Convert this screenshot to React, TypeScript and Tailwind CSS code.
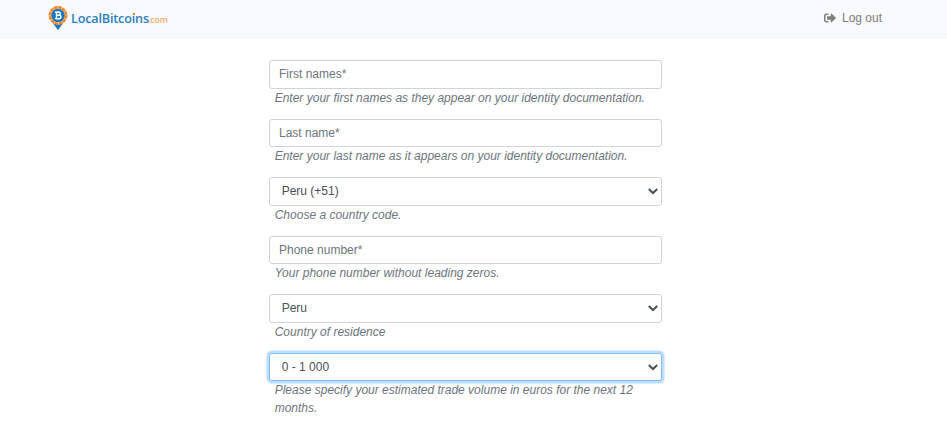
import React from "react";
import { FaSignOutAlt } from "react-icons/fa";

const control =
  "block h-[28.4px] w-full rounded-[3px] border bg-white text-[12px] leading-[18px]";
const hint = "pl-[5.7px] text-[12px] italic leading-[18px] text-[#6c757d]";

function TextField({ label, help }: { label: string; help: string }) {
  return (
    <div className="h-[58.5px]">
      <input
        className={
          control +
          " border-[#ced4da] px-[9px] pb-[0.2px] placeholder:text-[#6c757d] placeholder:opacity-100"
        }
        placeholder={label}
      />
      <p className={hint}>{help}</p>
    </div>
  );
}

function SelectField({ value, help, focused }: { value: string; help: string; focused?: boolean }) {
  return (
    <div className="h-[58.5px]">
      <div
        className={
          control +
          " text-[#495057] " +
          (focused ? "border-[#80bdff] shadow-[0_0_0_2.6px_rgba(0,123,255,0.25)]" : "border-[#ced4da]")
        }
      >
        <div className="flex h-full items-center justify-between pl-[11.7px] pr-[3px]">
          <span className="pb-[0.4px]">{value}</span>
          <svg width="10" height="7" viewBox="0 0 10 7" fill="none" stroke="#495057" strokeWidth="2" className="mt-[0.6px]">
            <path d="M0.8 1l4.2 4 4.2-4" />
          </svg>
        </div>
      </div>
      <p className={hint}>{help}</p>
    </div>
  );
}

function Logo() {
  return (
    <div className="flex h-[26px] items-center">
      <svg width="20" height="26" viewBox="0 0 20 26" className="shrink-0">
        <path d="M4.5 17.5h11L10 25.2z" fill="#1b78bd" />
        <circle cx="10" cy="10.4" r="9.4" fill="#f8bd86" />
        <circle cx="10" cy="10.4" r="8.2" fill="none" stroke="#f4872b" strokeWidth="2.3" strokeDasharray="3.1 1.19" />
        <circle cx="10" cy="10.4" r="6.7" fill="#1b78bd" />
        <g fill="none" stroke="#fff" strokeWidth="1.4">
          <path d="M7 7.2h3.6c2.3 0 2.3 3 0 3H8.4M8.4 10.2h2.6c2.5 0 2.5 3.4 0 3.4H7M8.5 7.2v6.4" />
          <path d="M9 5.9v1.3M10.8 5.9v1.3M9 13.6v1.3M10.8 13.6v1.3" strokeWidth="0.8" />
        </g>
      </svg>
      <div className="flex items-baseline pl-[3px] pt-[2px] font-['Open_Sans',sans-serif] leading-[18px]">
        <span className="w-[77px] whitespace-nowrap text-[12.6px] font-semibold tracking-[-0.16px] text-[#2a80c0]">
          LocalBitco
          <span className="relative">
            i
            <span className="absolute left-[1px] top-[3px] h-[2px] w-[2px] bg-[#f4872b]" />
          </span>
          ns
        </span>
        <span className="text-[8.5px] font-semibold text-[#f8ab6c]">.com</span>
      </div>
    </div>
  );
}

export default function App() {
  return (
    <div className="h-[425px] overflow-hidden bg-white font-['Liberation_Sans',Arial,sans-serif]">
      <header className="flex h-[39px] items-center justify-between bg-[#f8f9fa] pb-[3px] pl-[48px] pr-[65px]">
        <Logo />
        <div className="flex items-center gap-[6px] text-[12px] leading-[18px] text-[#7f7f7f]">
          <FaSignOutAlt size={12} />
          <span>Log out</span>
        </div>
      </header>
      <main className="ml-[269px] w-[393px] pt-[21.3px]">
        <TextField label="First names*" help="Enter your first names as they appear on your identity documentation." />
        <TextField label="Last name*" help="Enter your last name as it appears on your identity documentation." />
        <SelectField value="Peru (+51)" help="Choose a country code." />
        <TextField label="Phone number*" help="Your phone number without leading zeros." />
        <SelectField value="Peru" help="Country of residence" />
        <SelectField value="0 - 1 000" help="Please specify your estimated trade volume in euros for the next 12 months." focused />
      </main>
    </div>
  );
}
